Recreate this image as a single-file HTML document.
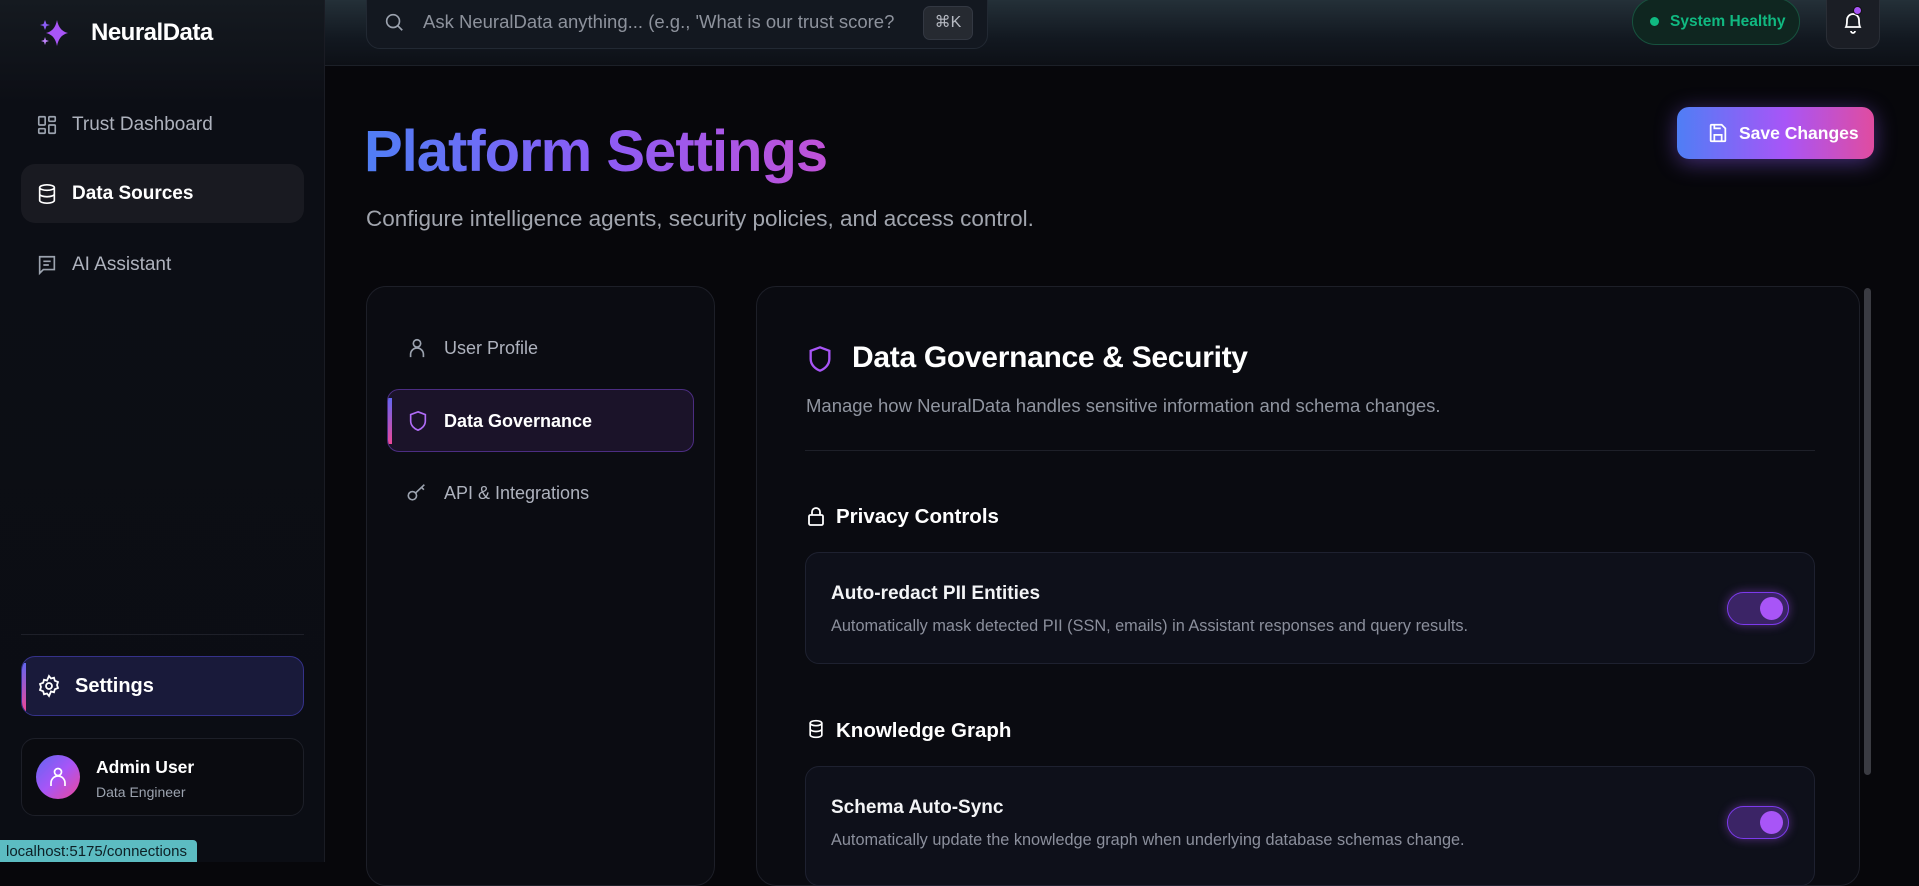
<!DOCTYPE html>
<html><head><meta charset="utf-8"><style>
*{box-sizing:border-box;margin:0;padding:0}
body{width:1919px;height:862px;overflow:hidden;background:#07070b;font-family:"Liberation Sans",sans-serif;position:relative;color:#fff}
.abs{position:absolute}
.sidebar{left:0;top:0;width:325px;height:862px;background:linear-gradient(180deg,#151a20 0%,#0c0e15 12%,#0b0d14 100%);border-right:1px solid #1a1c24}
.header{left:325px;top:0;width:1594px;height:66px;background:linear-gradient(180deg,#243038 0%,#121820 60%,#0d1016 100%);border-bottom:1px solid #1c2028}
.nav{left:21px;width:283px;height:59px;border-radius:14px;display:flex;align-items:center;padding-left:15px;font-size:19px;color:#aeb2bd}
.nav svg{margin-right:14px}
.card{background:#0b0c12;border:1px solid #1d1f28;border-radius:20px}
.set{left:805px;width:1010px;border-radius:14px;background:#0e101a;border:1px solid #1e2130}
.tog{width:62px;height:33px;border-radius:17px;background:#3b2466;border:1.5px solid #7c3aed;box-shadow:0 0 10px rgba(168,85,247,.45)}
.tog i{position:absolute;right:5px;top:4px;width:23px;height:23px;border-radius:50%;background:#a855f7}
.ttl{font-size:19px;font-weight:bold;color:#f3f4f6}
.dsc{font-size:16.3px;color:#8b8f9c}
</style></head><body>
<div class="abs sidebar"></div>
<div class="abs header"></div>
<svg class="abs" style="left:39px;top:18px" width="32" height="30" viewBox="0 0 32 30"><path d="M18 2 Q20 13 29 15 Q20 17 18 28 Q16 17 7 15 Q16 13 18 2Z" fill="#a855f7"/><path d="M6 2 L7.5 6 L11 7 L7.5 8 L6 12 L4.5 8 L1 7 L4.5 6Z" fill="#8b5cf6"/><path d="M6 19 L7 22 L10 23 L7 24 L6 27 L5 24 L2 23 L5 22Z" fill="#c084fc"/></svg>
<div class="abs" style="left:91px;top:19px;font-size:24px;font-weight:bold;letter-spacing:-.5px">NeuralData</div>
<div class="abs nav" style="top:95px"><svg width="22" height="22" viewBox="0 0 24 24" fill="none" stroke="#9ca3af" stroke-width="1.8"><rect x="3" y="3" width="7" height="9" rx="1"/><rect x="14" y="3" width="7" height="5" rx="1"/><rect x="14" y="12" width="7" height="9" rx="1"/><rect x="3" y="16" width="7" height="5" rx="1"/></svg>Trust Dashboard</div>
<div class="abs nav" style="top:164px;background:#191a21;color:#fff;font-weight:bold"><svg width="22" height="22" viewBox="0 0 24 24" fill="none" stroke="#fff" stroke-width="1.8"><ellipse cx="12" cy="5" rx="8" ry="3"/><path d="M4 5v14c0 1.7 3.6 3 8 3s8-1.3 8-3V5M4 12c0 1.7 3.6 3 8 3s8-1.3 8-3"/></svg>Data Sources</div>
<div class="abs nav" style="top:235px"><svg width="22" height="22" viewBox="0 0 24 24" fill="none" stroke="#9ca3af" stroke-width="1.8"><path d="M4 3h16v14H8l-4 4z"/><path d="M8 8h8M8 12h6"/></svg>AI Assistant</div>
<div class="abs" style="left:21px;top:634px;width:283px;height:1px;background:#1e2029"></div>
<div class="abs nav" style="top:656px;height:60px;background:#191a3a;border:1px solid #35328a;color:#fff;font-weight:bold;font-size:20px;padding-left:15px;overflow:hidden"><div class="abs" style="left:0;top:6px;width:4px;height:48px;background:linear-gradient(#6366f1,#ec4899)"></div><svg width="24" height="24" viewBox="0 0 24 24" fill="none" stroke="#fff" stroke-width="1.8"><circle cx="12" cy="12" r="3"/><path d="M12 2l2 2.5 3-.8.8 3L21 8l-1 3 1 3-3.2 1.3-.8 3-3-.8L12 22l-2-2.5-3 .8-.8-3L3 16l1-3-1-3 3.2-1.3.8-3 3 .8z"/></svg>Settings</div>
<div class="abs card" style="left:21px;top:738px;width:283px;height:78px;border-radius:14px;background:#0a0b10"></div>
<div class="abs" style="left:36px;top:755px;width:44px;height:44px;border-radius:50%;background:linear-gradient(135deg,#6366f1,#a855f7,#ec4899)"><svg style="position:absolute;left:12px;top:11px" width="20" height="22" viewBox="0 0 20 22" fill="none" stroke="#fff" stroke-width="1.7"><circle cx="10" cy="6" r="3.5"/><path d="M3 20v-3a5 5 0 0 1 14 0v3"/></svg></div>
<div class="abs" style="left:96px;top:757px;font-size:17.5px;font-weight:bold">Admin User</div>
<div class="abs" style="left:96px;top:784px;font-size:14px;color:#9ca3af">Data Engineer</div>
<div class="abs" style="left:0;top:840px;width:197px;height:22px;background:#5cbcc2;color:#0d2026;font-size:15px;padding:3px 0 0 6px;border-top-right-radius:4px">localhost:5175/connections</div>
<div class="abs" style="left:366px;top:-2px;width:622px;height:51px;border-radius:0 0 14px 14px;background:#131820;border:1px solid #222933"></div>
<svg class="abs" style="left:383px;top:11px" width="22" height="22" viewBox="0 0 24 24" fill="none" stroke="#9ca3af" stroke-width="1.8"><circle cx="11" cy="11" r="7"/><path d="M16 16l5 5"/></svg>
<div class="abs" style="left:423px;top:11px;font-size:18.5px;color:#8d929c;white-space:nowrap">Ask NeuralData anything... (e.g., 'What is our trust score?</div>
<div class="abs" style="left:923px;top:6px;width:50px;height:34px;border-radius:7px;background:#262a31;border:1px solid #333842;color:#b6bac2;font-size:16px;text-align:center;line-height:32px">⌘K</div>
<div class="abs" style="left:1632px;top:-2px;width:168px;height:47px;border-radius:24px;background:#0f2620;border:1px solid #17523e"></div>
<div class="abs" style="left:1650px;top:17px;width:9px;height:9px;border-radius:50%;background:#10b981"></div>
<div class="abs" style="left:1670px;top:13px;font-size:15.5px;font-weight:bold;color:#10b981">System Healthy</div>
<div class="abs" style="left:1826px;top:-2px;width:54px;height:51px;border-radius:0 0 12px 12px;background:#1b1e25;border:1px solid #2a2e36"></div>
<svg class="abs" style="left:1841px;top:9px" width="24" height="26" viewBox="0 0 24 26" fill="none" stroke="#fff" stroke-width="1.8"><path d="M5 18c1-2 1-4 1-7a6 6 0 0 1 12 0c0 3 0 5 1 7z"/><path d="M10 22a2 2 0 0 0 4 0"/></svg>
<div class="abs" style="left:1853px;top:6px;width:9px;height:9px;border-radius:50%;background:#a855f7;border:1.5px solid #111"></div>
<div class="abs" style="left:364px;top:117px;font-size:58px;font-weight:bold;letter-spacing:-1px;line-height:70px;background:linear-gradient(90deg,#4f7ef5 0%,#8b5cf6 50%,#c052d8 100%);-webkit-background-clip:text;background-clip:text;color:transparent">Platform Settings</div>
<div class="abs" style="left:366px;top:206px;font-size:22.5px;color:#a1a5ae">Configure intelligence agents, security policies, and access control.</div>
<div class="abs" style="left:1677px;top:107px;width:197px;height:52px;border-radius:12px;background:linear-gradient(90deg,#4f7ef5,#a855f7 55%,#e04ca0);box-shadow:0 4px 22px rgba(139,92,246,.45)"></div>
<svg class="abs" style="left:1707px;top:122px" width="22" height="22" viewBox="0 0 24 24" fill="none" stroke="#fff" stroke-width="1.9"><path d="M5 3h11l4 4v13a1 1 0 0 1-1 1H5a1 1 0 0 1-1-1V4a1 1 0 0 1 1-1z"/><path d="M8 21v-7h8v7M8 3v4h7"/></svg>
<div class="abs" style="left:1739px;top:123px;font-size:17.5px;font-weight:bold">Save Changes</div>
<div class="abs card" style="left:366px;top:286px;width:349px;height:600px"></div>
<svg class="abs" style="left:406px;top:337px" width="22" height="22" viewBox="0 0 24 24" fill="none" stroke="#9ca3af" stroke-width="1.8"><circle cx="12" cy="7" r="4"/><path d="M5 22v-3a7 7 0 0 1 14 0v3"/></svg>
<div class="abs" style="left:444px;top:338px;font-size:18px;color:#aeb2bd">User Profile</div>
<div class="abs" style="left:387px;top:389px;width:307px;height:63px;border-radius:12px;background:#1b1329;border:1px solid #4c2d82;overflow:hidden"><div class="abs" style="left:0;top:8px;width:4px;height:46px;background:linear-gradient(#6366f1,#ec4899)"></div></div>
<svg class="abs" style="left:407px;top:409px" width="22" height="24" viewBox="0 0 24 24" fill="none" stroke="#b06cf7" stroke-width="1.8"><path d="M12 2l8 3v7c0 5-4 8.5-8 10-4-1.5-8-5-8-10V5z"/></svg>
<div class="abs" style="left:444px;top:411px;font-size:18px;font-weight:bold">Data Governance</div>
<svg class="abs" style="left:406px;top:481px" width="22" height="22" viewBox="0 0 24 24" fill="none" stroke="#9ca3af" stroke-width="1.8"><circle cx="7" cy="16" r="4.5"/><path d="M10.5 13L20 4M17 7l2.5 2.5"/></svg>
<div class="abs" style="left:444px;top:483px;font-size:18px;color:#aeb2bd">API &amp; Integrations</div>
<div class="abs card" style="left:756px;top:286px;width:1104px;height:600px;background:#0a0b11"></div>
<div class="abs" style="left:1864px;top:288px;width:7px;height:487px;border-radius:4px;background:#3a3b42"></div>
<svg class="abs" style="left:806px;top:344px" width="28" height="30" viewBox="0 0 24 24" fill="none" stroke="#a855f7" stroke-width="2"><path d="M12 2l8 3v7c0 5-4 8.5-8 10-4-1.5-8-5-8-10V5z"/></svg>
<div class="abs" style="left:852px;top:341px;font-size:30px;font-weight:bold;letter-spacing:-.3px">Data Governance &amp; Security</div>
<div class="abs" style="left:806px;top:395px;font-size:18.5px;color:#9095a0">Manage how NeuralData handles sensitive information and schema changes.</div>
<div class="abs" style="left:805px;top:450px;width:1010px;height:1px;background:#1e2029"></div>
<svg class="abs" style="left:806px;top:505px" width="20" height="22" viewBox="0 0 20 22" fill="none" stroke="#fff" stroke-width="1.8"><rect x="3" y="10" width="14" height="10" rx="1.5"/><path d="M6 10V7a4 4 0 0 1 8 0v3"/></svg>
<div class="abs" style="left:836px;top:505px;font-size:20.5px;font-weight:bold">Privacy Controls</div>
<div class="abs set" style="top:552px;height:112px"></div>
<div class="abs ttl" style="left:831px;top:583px">Auto-redact PII Entities</div>
<div class="abs dsc" style="left:831px;top:617px">Automatically mask detected PII (SSN, emails) in Assistant responses and query results.</div>
<div class="abs tog" style="left:1727px;top:592px"><i></i></div>
<svg class="abs" style="left:806px;top:718px" width="20" height="22" viewBox="0 0 24 24" fill="none" stroke="#fff" stroke-width="2"><ellipse cx="12" cy="5" rx="7" ry="3"/><path d="M5 5v14c0 1.7 3.1 3 7 3s7-1.3 7-3V5M5 12c0 1.7 3.1 3 7 3s7-1.3 7-3"/></svg>
<div class="abs" style="left:836px;top:719px;font-size:20.5px;font-weight:bold">Knowledge Graph</div>
<div class="abs set" style="top:766px;height:120px"></div>
<div class="abs ttl" style="left:831px;top:797px">Schema Auto-Sync</div>
<div class="abs dsc" style="left:831px;top:831px">Automatically update the knowledge graph when underlying database schemas change.</div>
<div class="abs tog" style="left:1727px;top:806px"><i></i></div>
</body></html>
